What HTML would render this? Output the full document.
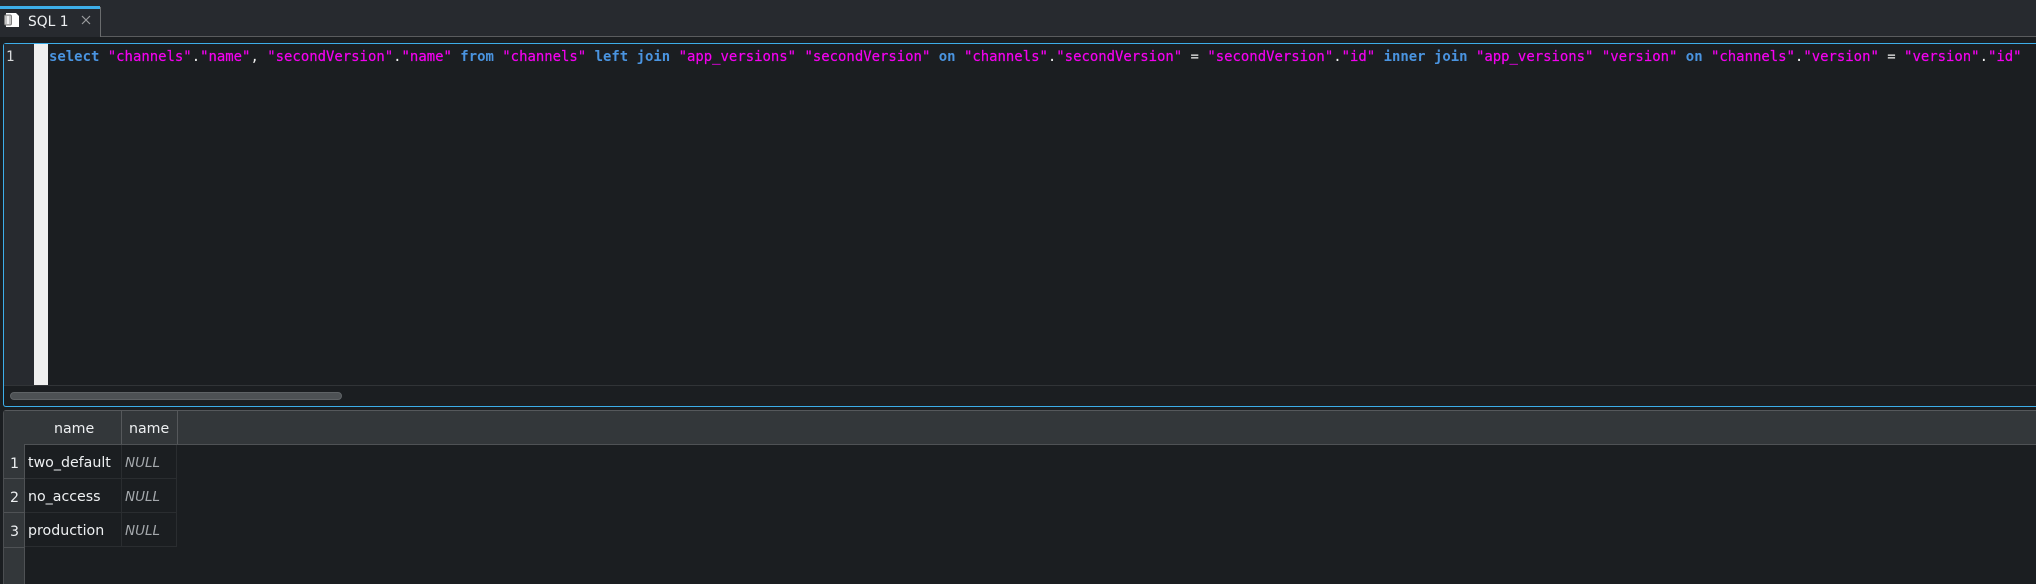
<!DOCTYPE html>
<html><head><meta charset="utf-8"><style>
*{box-sizing:border-box}
html,body{margin:0;padding:0;width:2036px;height:584px;overflow:hidden;background:#1b1e21}
div{position:absolute}
.ui{font-family:"DejaVu Sans",sans-serif;font-size:14.2px;color:#eef0f2;line-height:20px;white-space:pre}
#code{left:49px;top:46px;height:22px;line-height:22px;font-family:"DejaVu Sans Mono",monospace;font-size:13.95px;white-space:pre;color:#f0f0f0}
b{color:#4a94e0;font-weight:bold}
i{font-style:normal;color:#f400f0;-webkit-text-stroke:.2px #f400f0}
.null{font-style:italic;color:#a4a8ac;font-size:13.5px}
</style></head><body>
<div style="left:0;top:0;width:2036px;height:36px;background:#272a2f"></div>
<div style="left:0;top:36px;width:2036px;height:1px;background:#5a5c5e"></div>
<div style="left:0;top:6px;width:100px;height:31px;background:#272a2f"></div>
<div style="left:100px;top:7px;width:1px;height:30px;background:#6a6c6e"></div>
<div style="left:0;top:6px;width:100px;height:3px;background:#3daee9"></div>
<div style="left:0;top:36px;width:100px;height:1px;background:#272a2f"></div>
<svg style="position:absolute;left:3px;top:12px" width="18" height="16" viewBox="0 0 18 16"><path d="M3 1h10l3 3v11H3z" fill="#fff"/><rect x="1.5" y="3" width="7" height="10" rx="1.5" fill="#c4c4c4" stroke="#808080"/><rect x="4" y="4" width="2" height="8" fill="#f0f0f0"/></svg>
<div class="ui" style="left:28px;top:12px;font-size:13.8px">SQL 1</div>
<svg style="position:absolute;left:80px;top:14px" width="12" height="12" viewBox="0 0 12 12"><path d="M2 2l8 8M10 2l-8 8" stroke="#9a9c9e" stroke-width="1.2" fill="none"/></svg>

<div style="left:3px;top:43px;width:2033px;height:364px;background:#1b1e21;border:1px solid #3daee9;border-right:0;border-radius:3px 0 0 3px"></div>
<div style="left:4px;top:44px;width:30px;height:341px;background:#272a2f"></div>
<div style="left:34px;top:44px;width:14px;height:341px;background:#efefef"></div>
<div class="ui" style="left:6px;top:46px;font-family:'DejaVu Sans Mono',monospace;font-size:13.95px;line-height:22px;color:#d8dadc">1</div>
<div id="code"><b>select</b> <i>"channels"</i>.<i>"name"</i>, <i>"secondVersion"</i>.<i>"name"</i> <b>from</b> <i>"channels"</i> <b>left</b> <b>join</b> <i>"app_versions"</i> <i>"secondVersion"</i> <b>on</b> <i>"channels"</i>.<i>"secondVersion"</i> = <i>"secondVersion"</i>.<i>"id"</i> <b>inner</b> <b>join</b> <i>"app_versions"</i> <i>"version"</i> <b>on</b> <i>"channels"</i>.<i>"version"</i> = <i>"version"</i>.<i>"id"</i></div>
<div style="left:4px;top:385px;width:2032px;height:1px;background:#313437"></div>
<div style="left:10px;top:392px;width:332px;height:8px;border-radius:4px;background:#4d5154;border:1px solid #5f6366"></div>

<div style="left:3px;top:410px;width:2033px;height:174px;background:#1b1e21;border-left:1px solid #4b4e51;border-top:1px solid #55585b;border-radius:3px 0 0 0"></div>
<div style="left:4px;top:411px;width:2032px;height:33px;background:#33373a"></div>
<div style="left:4px;top:444px;width:2032px;height:1px;background:#4f5255"></div>
<div style="left:121px;top:411px;width:1px;height:33px;background:#55585b"></div>
<div style="left:177px;top:411px;width:1px;height:33px;background:#55585b"></div>
<div class="ui" style="left:54px;top:419px">name</div>
<div class="ui" style="left:129px;top:419px">name</div>

<div style="left:4px;top:444px;width:21px;height:140px;background:#33373a;border-right:1px solid #4f5255"></div>
<div style="left:4px;top:478px;width:20px;height:1px;background:#4f5255"></div>
<div style="left:4px;top:512px;width:20px;height:1px;background:#4f5255"></div>
<div style="left:4px;top:547px;width:20px;height:1px;background:#4f5255"></div>
<div class="ui" style="left:10px;top:454px">1</div>
<div class="ui" style="left:10px;top:488px">2</div>
<div class="ui" style="left:10px;top:522px">3</div>

<div style="left:121px;top:445px;width:1px;height:102px;background:#2a2d30"></div>
<div style="left:176px;top:445px;width:1px;height:102px;background:#2a2d30"></div>
<div style="left:25px;top:478px;width:152px;height:1px;background:#2a2d30"></div>
<div style="left:25px;top:512px;width:152px;height:1px;background:#2a2d30"></div>
<div style="left:25px;top:546px;width:152px;height:1px;background:#2a2d30"></div>
<div class="ui" style="left:28px;top:453px">two_default</div>
<div class="ui" style="left:28px;top:487px">no_access</div>
<div class="ui" style="left:28px;top:521px">production</div>
<div class="ui null" style="left:125px;top:453px">NULL</div>
<div class="ui null" style="left:125px;top:487px">NULL</div>
<div class="ui null" style="left:125px;top:521px">NULL</div>
</body></html>
